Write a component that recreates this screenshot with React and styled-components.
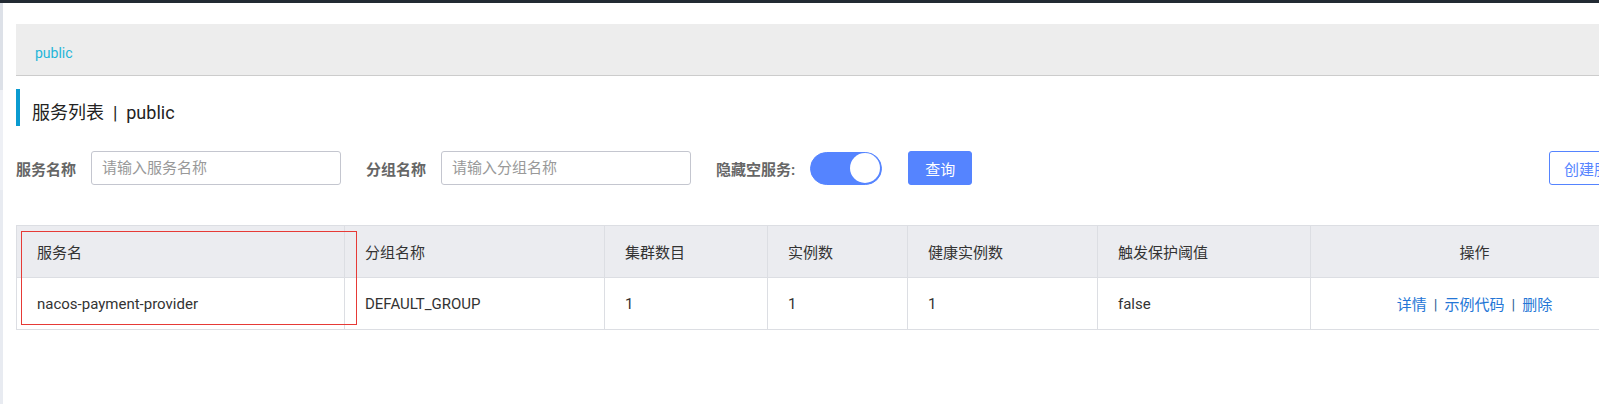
import React from "react";
import styled, { createGlobalStyle } from "styled-components";

const GlobalStyle = createGlobalStyle`
  html, body {
    margin: 0;
    padding: 0;
    background: #fff;
    overflow: hidden;
  }
  body {
    font-family: Roboto, "Noto Sans CJK SC", sans-serif;
    font-size: 15px;
    color: #333;
  }
  * {
    box-sizing: border-box;
  }
`;

const TopBar = styled.div`
  height: 3px;
  background: #222a33;
`;

const Shell = styled.div`
  display: flex;
  height: 401px;
`;

const SideEdge = styled.div`
  flex: 0 0 3px;
  background: linear-gradient(
    to bottom,
    #dde1e8 0,
    #dde1e8 87px,
    #eef0f5 87px,
    #eef0f5 187px,
    #e8ebf1 187px
  );
`;

const Main = styled.main`
  flex: 0 0 auto;
  width: 1623px;
  margin-left: 13px;
  padding-top: 21px;
`;

const Crumb = styled.div`
  height: 52px;
  display: flex;
  align-items: center;
  padding-left: 19px;
  padding-top: 6px;
  background: #ededed;
  border-bottom: 1px solid #cccccc;
  color: #1fb6d9;
  font-size: 14px;
`;

const Title = styled.h2`
  margin: 13px 0 0;
  height: 37px;
  display: flex;
  align-items: center;
  padding-left: 12px;
  padding-top: 6px;
  border-left: 4px solid #0a9bd0;
  font-size: 18px;
  font-weight: 400;
  color: #222;
  white-space: pre;
`;

const SearchRow = styled.div`
  margin-top: 25px;
  height: 34px;
  display: flex;
  align-items: center;
`;

const Label = styled.label`
  font-weight: 700;
  color: #666;
  font-size: 15px;
  margin-right: ${({ $gap }) => $gap}px;
  white-space: nowrap;
`;

const Input = styled.input`
  width: 250px;
  height: 34px;
  border: 1px solid #c4c6cf;
  border-radius: 3px;
  padding: 0 10px;
  margin-right: 25px;
  font-family: inherit;
  font-size: 15px;
  outline: none;
  &::placeholder {
    color: #999;
  }
`;

const Switch = styled.div`
  width: 72px;
  height: 33px;
  border-radius: 17px;
  background: #5584ff;
  border: 1px solid #5584ff;
  display: flex;
  justify-content: flex-end;
  align-items: center;
  padding-right: 1px;
  margin-right: 26px;
`;

const Knob = styled.span`
  width: 30px;
  height: 30px;
  border-radius: 50%;
  background: #fff;
`;

const Button = styled.button`
  height: 34px;
  padding: 0 ${({ $pad }) => $pad}px;
  border-radius: 3px;
  font-family: inherit;
  font-size: 15px;
  cursor: pointer;
  border: 1px solid #5584ff;
  background: ${({ $primary }) => ($primary ? "#5584ff" : "#fff")};
  color: ${({ $primary }) => ($primary ? "#fff" : "#5584ff")};
  margin-left: ${({ $push }) => ($push ? "auto" : "0")};
  white-space: nowrap;
`;

const TableWrap = styled.div`
  position: relative;
  margin-top: 40px;
`;

const Table = styled.table`
  width: 100%;
  table-layout: fixed;
  border-collapse: collapse;
  border: 1px solid #dcdee3;
`;

const Th = styled.th`
  height: 52px;
  background: #ebecf0;
  border: 1px solid #dcdee3;
  padding: 0 20px;
  text-align: ${({ $center }) => ($center ? "center" : "left")};
  font-weight: 400;
  color: #333;
  font-size: 15px;
`;

const Td = styled.td`
  height: 52px;
  border: 1px solid #dcdee3;
  padding: 0 20px;
  text-align: ${({ $center }) => ($center ? "center" : "left")};
  color: #333;
  font-size: 15px;
  white-space: nowrap;
`;

const Link = styled.a`
  color: #2476d6;
  text-decoration: none;
  cursor: pointer;
`;

const Sep = styled.span`
  color: #2f5f96;
  margin: 0 7px;
`;

const Highlight = styled.div`
  position: absolute;
  left: 5px;
  top: 6px;
  width: 336px;
  height: 94px;
  border: 1px solid #e63a36;
  pointer-events: none;
`;

const columns = [
  { key: "name", title: "服务名", width: 328 },
  { key: "group", title: "分组名称", width: 260 },
  { key: "clusters", title: "集群数目", width: 163 },
  { key: "instances", title: "实例数", width: 140 },
  { key: "healthy", title: "健康实例数", width: 190 },
  { key: "threshold", title: "触发保护阈值", width: 213 },
];

const rows = [
  {
    name: "nacos-payment-provider",
    group: "DEFAULT_GROUP",
    clusters: 1,
    instances: 1,
    healthy: 1,
    threshold: "false",
  },
];

const actions = ["详情", "示例代码", "删除"];

export default function App() {
  return (
    <>
      <GlobalStyle />
      <TopBar />
      <Shell>
        <SideEdge />
        <Main>
          <Crumb>public</Crumb>
          <Title>{"服务列表  |  public"}</Title>

          <SearchRow>
            <Label $gap={15}>服务名称</Label>
            <Input placeholder="请输入服务名称" />
            <Label $gap={15}>分组名称</Label>
            <Input placeholder="请输入分组名称" />
            <Label $gap={15}>隐藏空服务:</Label>
            <Switch>
              <Knob />
            </Switch>
            <Button $primary $pad={16}>查询</Button>
            <Button $push $pad={14}>创建服务</Button>
          </SearchRow>

          <TableWrap>
            <Table>
              <colgroup>
                {columns.map((c) => (
                  <col key={c.key} style={{ width: c.width }} />
                ))}
                <col />
              </colgroup>
              <thead>
                <tr>
                  {columns.map((c) => (
                    <Th key={c.key}>{c.title}</Th>
                  ))}
                  <Th $center>操作</Th>
                </tr>
              </thead>
              <tbody>
                {rows.map((r) => (
                  <tr key={r.name}>
                    {columns.map((c) => (
                      <Td key={c.key}>{r[c.key]}</Td>
                    ))}
                    <Td $center>
                      {actions.map((a, i) => (
                        <React.Fragment key={a}>
                          {i > 0 && <Sep>|</Sep>}
                          <Link>{a}</Link>
                        </React.Fragment>
                      ))}
                    </Td>
                  </tr>
                ))}
              </tbody>
            </Table>
            <Highlight />
          </TableWrap>
        </Main>
      </Shell>
    </>
  );
}
